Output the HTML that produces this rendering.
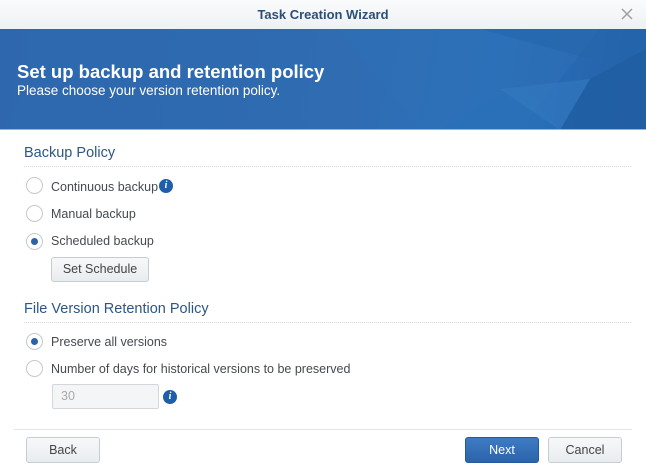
<!DOCTYPE html>
<html><head><style>
*{margin:0;padding:0;box-sizing:border-box}
body{width:646px;height:466px;overflow:hidden;background:#fff;font-family:"Liberation Sans",sans-serif;position:relative;color:#444}
.abs{position:absolute}
.top{left:0;top:0;width:646px;height:29px;background:linear-gradient(#fafbfc,#eef1f4);text-align:center;font-weight:bold;font-size:13px;color:#2c4f78;line-height:29px}
.ban{left:0;top:29px;width:646px;height:101px;background:linear-gradient(100deg,#2e67ad 0%,#2f6cb2 55%,#2a72bd 75%,#245fa5 100%);overflow:hidden}
.ban .t{position:absolute;left:17px;top:32px;color:#fff;font-weight:bold;font-size:18.5px}
.ban .s{position:absolute;left:17px;top:54px;color:#fff;font-size:13.5px}
.h{font-size:14.5px;color:#2d5686}
.dot{height:0;border-top:1px dotted #d4d8dc}
.r{width:17px;height:17px;border:1px solid #c4c9ce;border-radius:50%;background:#fff}
.r.on::after{content:"";position:absolute;left:4px;top:4px;width:7px;height:7px;border-radius:50%;background:#2b64a6}
.l{font-size:12.5px;color:#454a50}
.btn{border:1px solid #c7ccd2;border-radius:3px;background:linear-gradient(#f7f8f9,#e9ecef);font-size:12.5px;color:#444;text-align:center}
.i{width:14px;height:14px;border-radius:50%;background:#1f5ea8;color:#fff;font:italic bold 10px "Liberation Serif",serif;text-align:center;line-height:14px}
</style></head><body>
<div class="abs top">Task Creation Wizard</div>
<svg class="abs" style="left:621px;top:8px" width="12" height="12"><path d="M1 1L11 11M11 1L1 11" stroke="#9aa1a8" stroke-width="1.5"/></svg>
<div class="abs ban">
<svg class="abs" style="left:0;top:0" width="646" height="101">
<polygon points="340,0 600,0 520,101 420,101" fill="#2f6fb6" opacity=".6"/>
<polygon points="480,0 646,0 646,60 590,30" fill="#2565ab" opacity=".6"/>
<polygon points="590,50 646,20 646,101 560,101" fill="#215ea3" opacity=".8"/>
<polygon points="440,101 520,55 560,101" fill="#2a70b8" opacity=".7"/>
<polygon points="500,60 590,50 560,101" fill="#347ac0" opacity=".6"/>
</svg>
<div class="t">Set up backup and retention policy</div>
<div class="s">Please choose your version retention policy.</div>
</div>
<div class="abs" style="left:0;top:129px;width:646px;height:1px;background:#8fb5e0"></div>
<div class="abs h" style="left:24px;top:145px">Backup Policy</div>
<div class="abs dot" style="left:24px;top:166px;width:607px"></div>
<div class="abs r" style="left:26px;top:177px"></div><div class="abs l" style="left:51px;top:180px">Continuous backup</div>
<div class="abs i" style="left:159px;top:179px">i</div>
<div class="abs r" style="left:26px;top:205px"></div><div class="abs l" style="left:51px;top:207px">Manual backup</div>
<div class="abs r on" style="left:26px;top:233px"></div><div class="abs l" style="left:51px;top:234px">Scheduled backup</div>
<div class="abs btn" style="left:51px;top:257px;width:98px;height:25px;line-height:23px">Set Schedule</div>
<div class="abs h" style="left:24px;top:301px">File Version Retention Policy</div>
<div class="abs dot" style="left:24px;top:322px;width:607px"></div>
<div class="abs r on" style="left:26px;top:333px"></div><div class="abs l" style="left:51px;top:335px">Preserve all versions</div>
<div class="abs r" style="left:26px;top:360px"></div><div class="abs l" style="left:51px;top:362px">Number of days for historical versions to be preserved</div>
<div class="abs" style="left:52px;top:384px;width:107px;height:25px;border:1px solid #d3d7db;border-radius:2px;background:#f4f5f6;font-size:12.5px;color:#aaa;padding-left:8px;line-height:23px">30</div>
<div class="abs i" style="left:163px;top:390px">i</div>
<div class="abs" style="left:14px;top:429px;width:618px;height:1px;background:#e2e5e8"></div>
<div class="abs btn" style="left:26px;top:437px;width:74px;height:26px;line-height:24px">Back</div>
<div class="abs btn" style="left:465px;top:437px;width:74px;height:26px;line-height:24px;background:linear-gradient(#3f7cc4,#2a64aa);border-color:#235a9c;color:#fff">Next</div>
<div class="abs btn" style="left:548px;top:437px;width:74px;height:26px;line-height:24px">Cancel</div>
</body></html>
